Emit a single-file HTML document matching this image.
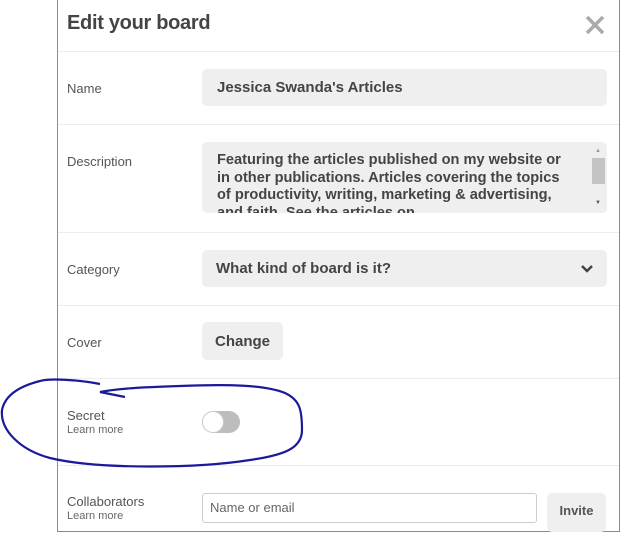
<!DOCTYPE html>
<html><head><style>
body{margin:0;width:620px;height:534px;background:#fff;position:relative;overflow:hidden;font-family:"Liberation Sans",sans-serif;color:#555}
.box{position:absolute;left:57px;top:-2px;width:561px;height:533px;border:1px solid #a08484;border-top:none}
.t{position:absolute;left:67px;top:12px;font-size:20px;font-weight:bold;color:#444;letter-spacing:-0.3px}
.x{position:absolute;left:584px;top:14px}
.hr{position:absolute;left:58px;width:561px;height:1px;background:#ececec}
.l{position:absolute;left:67px;font-size:13px;color:#555}
.s{font-size:11px;color:#666;display:block;margin-top:1px}
.in{position:absolute;left:202px;background:#efefef;border-radius:5px;font-weight:bold;color:#444;font-size:15px}
</style></head><body>
<div class="box"></div>
<div class="t">Edit your board</div>
<svg class="x" width="22" height="22"><path d="M3 3L19 19M19 3L3 19" stroke="#aaa" stroke-width="3.5"/></svg>
<div class="hr" style="top:51px"></div>
<div class="l" style="top:81px">Name</div>
<div class="in" style="top:69px;width:405px;height:37px;line-height:37px;padding-left:15px;box-sizing:border-box">Jessica Swanda's Articles</div>
<div class="hr" style="top:124px"></div>
<div class="l" style="top:154px">Description</div>
<div class="in" style="top:142px;width:405px;height:71px;overflow:hidden;padding:10px 30px 0 15px;box-sizing:border-box;line-height:17.5px;font-size:14.6px">Featuring the articles published on my website or in other publications. Articles covering the topics of productivity, writing, marketing &amp; advertising, and faith. See the articles on</div>
<div style="position:absolute;left:592px;top:158px;width:13px;height:26px;background:#c4c4c4"></div>
<div style="position:absolute;left:595px;top:148px;font-size:6px;color:#999">▲</div>
<div style="position:absolute;left:595px;top:200px;font-size:6px;color:#555">▼</div>
<div class="hr" style="top:232px"></div>
<div class="l" style="top:262px">Category</div>
<div class="in" style="top:250px;width:405px;height:37px;line-height:37px;padding-left:14px;box-sizing:border-box">What kind of board is it?</div>
<svg style="position:absolute;left:580px;top:263px" width="14" height="12"><path d="M2 3L7 8L12 3" stroke="#444" stroke-width="2.5" fill="none"/></svg>
<div class="hr" style="top:305px"></div>
<div class="l" style="top:335px">Cover</div>
<div class="in" style="top:322px;width:81px;height:38px;line-height:40px;text-align:center">Change</div>
<div class="hr" style="top:378px"></div>
<div class="l" style="top:408px">Secret<span class="s">Learn more</span></div>
<div style="position:absolute;left:202px;top:411px;width:38px;height:22px;border-radius:11px;background:#bdbdbd"></div>
<div style="position:absolute;left:202px;top:411px;width:20px;height:20px;border-radius:50%;background:#fff;border:1px solid #ccc"></div>
<div class="hr" style="top:465px"></div>
<div class="l" style="top:494px">Collaborators<span class="s">Learn more</span></div>
<div style="position:absolute;left:202px;top:493px;width:335px;height:30px;border:1px solid #ccc;border-radius:3px;box-sizing:border-box;font-size:13px;line-height:28px;padding-left:7px;color:#666">Name or email</div>
<div class="in" style="left:547px;top:493px;width:59px;height:39px;line-height:36px;text-align:center;font-size:13px;color:#555">Invite</div>
<svg style="position:absolute;left:0;top:0" width="620" height="534"><path d="M100 384 C80 380,50 378,40 381 C20 386,5 395,2 410 C0 430,20 450,50 458 C100 470,200 468,250 460 C285 455,302 448,302 430 C302 410,300 400,285 393 C265 385,230 384,180 386 C150 387,120 388,100 392 L125 397" stroke="#1a1a9a" stroke-width="2.2" fill="none"/></svg>
</body></html>
